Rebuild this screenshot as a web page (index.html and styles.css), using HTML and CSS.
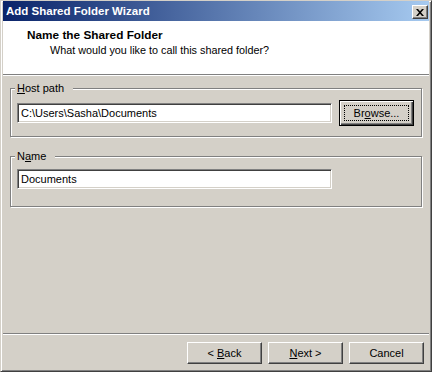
FILE: index.html
```html
<!DOCTYPE html>
<html lang="en">

<head>
    <meta charset="UTF-8">
    <meta name="viewport" content="width=device-width, initial-scale=1.0">
    <title>Add Shared Folder Wizard</title>
    <link rel="stylesheet" href="styles.css">
</head>

<body>
    <div class="window">
        <div class="titlebar">
            <span class="title">Add Shared Folder Wizard</span>
            <button class="close-btn" aria-label="Close">
                <svg width="8" height="7" viewBox="0 0 8 7">
                    <path d="M0 0h2l2 2.2L6 0h2L5 3.5 8 7H6L4 4.8 2 7H0l3-3.5z" fill="#000" />
                </svg>
            </button>
        </div>

        <div class="header">
            <h1>Name the Shared Folder</h1>
            <p>What would you like to call this shared folder?</p>
        </div>

        <div class="content">
            <!-- 主机路径 -->
            <fieldset class="group group-path">
                <legend><u>H</u>ost path</legend>
                <div class="row">
                    <input type="text" class="field" value="C:\Users\Sasha\Documents">
                    <button class="btn btn-default"><span class="focus">Br<u>o</u>wse...</span></button>
                </div>
            </fieldset>

            <!-- 共享名称 -->
            <fieldset class="group group-name">
                <legend>N<u>a</u>me</legend>
                <div class="row">
                    <input type="text" class="field" value="Documents">
                </div>
            </fieldset>
        </div>

        <div class="footer">
            <button class="btn">&lt; <u>B</u>ack</button>
            <button class="btn"><u>N</u>ext &gt;</button>
            <button class="btn">Cancel</button>
        </div>
    </div>
</body>

</html>
```

FILE: styles.css
```css
* {
    box-sizing: border-box;
}

body {
    margin: 0;
    padding: 0;
    font-family: 'Liberation Sans', Arial, sans-serif;
    font-size: 11px;
    color: #000;
    background-color: #d4d0c8;
}

.window {
    width: 432px;
    height: 372px;
    display: flex;
    flex-direction: column;
    background-color: #d4d0c8;
    border: 1px solid;
    border-color: #d4d0c8 #404040 #404040 #d4d0c8;
    box-shadow: inset 1px 1px 0 #ffffff, inset -1px -1px 0 #808080;
    padding: 0 2px 1px 2px;
}

.titlebar {
    height: 20px;
    display: flex;
    align-items: center;
    justify-content: space-between;
    padding: 0 1px 0 3px;
    background: linear-gradient(to right, #0a246a, #a6caf0);
}

.title {
    color: #ffffff;
    font-weight: bold;
    font-size: 11.5px;
}

.close-btn {
    width: 16px;
    height: 14px;
    margin-top: 2px;
    padding: 0;
    display: flex;
    align-items: center;
    justify-content: center;
    background-color: #d4d0c8;
    border: 1px solid;
    border-color: #ffffff #404040 #404040 #ffffff;
    box-shadow: inset -1px -1px 0 #808080;
}

.header {
    height: 54px;
    background-color: #ffffff;
    border-bottom: 1px solid #808080;
    box-shadow: 0 1px 0 #ffffff;
    padding: 8px 0 0 24px;
}

.header h1 {
    margin: 0;
    font-size: 11.8px;
    line-height: 13px;
    font-weight: bold;
}

.header p {
    margin: 2px 0 0 23px;
    font-size: 10.8px;
    line-height: 13px;
}

.content {
    padding: 7px 7px 0 7px;
}

.group {
    margin: 0;
    padding: 5px 6px 10px 6px;
    border: 1px solid #808080;
    box-shadow: 1px 1px 0 #ffffff, inset 1px 1px 0 #ffffff;
}

.group legend {
    position: relative;
    padding: 0 9px 0 2px;
    margin-left: -2px;
    line-height: 13px;
    background-color: #d4d0c8;
}

.group-name {
    margin-top: 13px;
    padding: 3px 6px 14px 6px;
}

.row {
    height: 26px;
    display: flex;
    align-items: center;
    gap: 7px;
}

.field {
    width: 315px;
    height: 20px;
    padding: 0 3px;
    font-family: inherit;
    font-size: 11px;
    color: #000;
    background-color: #ffffff;
    border: 1px solid;
    border-color: #808080 #ffffff #ffffff #808080;
    box-shadow: inset 1px 1px 0 #404040, inset -1px -1px 0 #d4d0c8;
    outline: none;
}

.btn {
    width: 75px;
    height: 22px;
    padding: 0;
    font-family: inherit;
    font-size: 11px;
    color: #000;
    background-color: #d4d0c8;
    border: 1px solid;
    border-color: #ffffff #404040 #404040 #ffffff;
    box-shadow: inset -1px -1px 0 #808080;
}

.btn-default {
    height: 26px;
    border: 1px solid #000;
    box-shadow: inset 1px 1px 0 #ffffff, inset -1px -1px 0 #404040, inset -2px -2px 0 #808080;
    display: flex;
    align-items: center;
    justify-content: center;
}

.btn-default .focus {
    width: 65px;
    height: 16px;
    line-height: 14px;
    border: 1px dotted #000;
}

.footer {
    margin-top: auto;
    border-top: 1px solid #808080;
    box-shadow: inset 0 1px 0 #ffffff;
    padding: 8px 5px 6px 0;
    display: flex;
    justify-content: flex-end;
    gap: 6px;
}
```
